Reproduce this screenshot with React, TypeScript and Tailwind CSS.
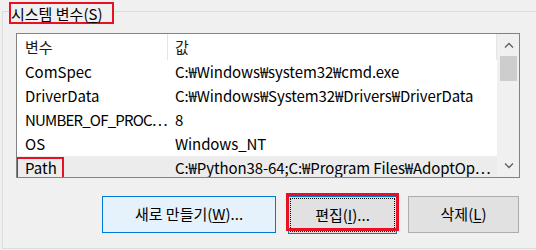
import React from "react";

const FONT = { fontFamily: '"Noto Sans CJK KR", "Noto Sans", sans-serif' };

const ROWS = [
  { name: "ComSpec", value: "C:₩Windows₩system32₩cmd.exe" },
  { name: "DriverData", value: "C:₩Windows₩System32₩Drivers₩DriverData" },
  { name: "NUMBER_OF_PROC…", value: "8", tight: true },
  { name: "OS", value: "Windows_NT" },
  { name: "Path", value: "C:₩Python38-64;C:₩Program Files₩AdoptOp…", selected: true },
];

function Chevron({ up }: { up?: boolean }) {
  return (
    <svg width="10" height="6" viewBox="0 0 10 6">
      <polyline
        points={up ? "1,5.5 5,1.5 9,5.5" : "1,0.5 5,4.5 9,0.5"}
        fill="none"
        stroke="#606060"
        strokeWidth="1.3"
      />
    </svg>
  );
}

function Key({ label, k, tail = "" }: { label: string; k: string; tail?: string }) {
  return (
    <span>
      {label}(<span className="underline underline-offset-2">{k}</span>){tail}
    </span>
  );
}

export default function App() {
  return (
    <div className="h-[250px] w-[536px] overflow-hidden bg-[#f0f0f0] pl-[2px] pt-[11px] text-[15px] text-black" style={FONT}>
      <div className="relative h-[238px] border border-r-0 border-[#dcdcdc]">
        {/* group title over the frame line */}
        <div className="absolute left-[6px] top-[-10px] flex h-[22px] w-[105px] items-center border-2 border-[#e81123] bg-[#f0f0f0] leading-none">
          <Key label="시스템 변수" k="S" />
        </div>

        <div className="flex flex-col pl-[13px] pt-[21px]">
          <div className="flex h-[145px] w-[504px] border border-[#828282] bg-white">
            <div className="flex w-[480px] flex-col overflow-hidden">
              <div className="flex h-[26px] shrink-0 items-center">
                <div className="flex h-full w-[151px] items-center border-r border-[#e5e5e5] pl-[8px] text-[#1a1a1a]">변수</div>
                <div className="flex h-full flex-1 items-center border-r border-[#e5e5e5] pl-[7px] text-[#1a1a1a]">값</div>
              </div>
              {ROWS.map((r) => (
                <div
                  key={r.name}
                  className={`relative flex h-[24px] shrink-0 items-center whitespace-nowrap ${r.selected ? "bg-[#ececec]" : ""}`}
                >
                  <div className={`w-[151px] shrink-0 overflow-hidden pl-[8px] ${r.tight ? "tracking-[-0.8px]" : ""}`}>{r.name}</div>
                  <div className="flex-1 overflow-hidden pl-[7px] tracking-[-0.1px]">{r.value}</div>
                  {r.selected && (
                    <div className="absolute left-[-1px] top-[1px] h-[22px] w-[48px] border-2 border-[#e81123]" />
                  )}
                </div>
              ))}
            </div>
            <div className="flex w-[22px] flex-col items-center bg-[#f0f0f0] pl-px">
              <div className="flex h-[22px] w-full items-center justify-center">
                <Chevron up />
              </div>
              <div className="h-[25px] w-[17px] bg-[#cdcdcd]" />
              <div className="flex-1" />
              <div className="flex h-[22px] w-full items-center justify-center">
                <Chevron />
              </div>
            </div>
          </div>

          <div className="ml-[86px] mt-[18px] flex">
            <button className="flex h-[37px] w-[174px] items-center justify-center border border-[#0078d7] bg-[#e5f1fb]">
              <Key label="새로 만들기" k="W" tail="..." />
            </button>
            <button className="relative ml-[12px] flex h-[38px] w-[109px] items-center justify-center border border-[#0078d7] bg-[#e1e1e1]">
              <div className="absolute inset-[1px] border border-dotted border-black" />
              <Key label="편집" k="I" tail="..." />
              <div className="absolute bottom-[2px] left-[-3px] right-[-3px] top-[-4px] border-[3px] border-[#e81123]" />
            </button>
            <button className="ml-[11px] flex h-[37px] w-[111px] items-center justify-center border border-[#adadad] bg-[#e1e1e1]">
              <Key label="삭제" k="L" />
            </button>
          </div>
        </div>
      </div>
    </div>
  );
}
